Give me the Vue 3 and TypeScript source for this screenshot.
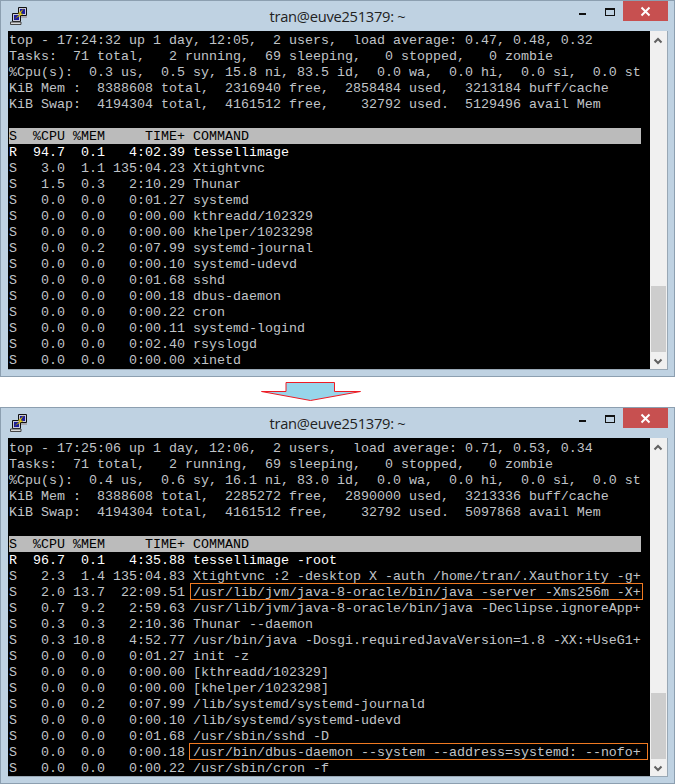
<script setup lang="ts">
interface Row { text: string; box?: string; wide?: boolean; strong?: boolean }
interface Term { summary: string[]; rows: Row[] }

const header = 'S  %CPU %MEM     TIME+ COMMAND'

const first: Term = {
  summary: [
    'top - 17:24:32 up 1 day, 12:05,  2 users,  load average: 0.47, 0.48, 0.32',
    'Tasks:  71 total,   2 running,  69 sleeping,   0 stopped,   0 zombie',
    '%Cpu(s):  0.3 us,  0.5 sy, 15.8 ni, 83.5 id,  0.0 wa,  0.0 hi,  0.0 si,  0.0 st',
    'KiB Mem :  8388608 total,  2316940 free,  2858484 used,  3213184 buff/cache',
    'KiB Swap:  4194304 total,  4161512 free,    32792 used.  5129496 avail Mem',
  ],
  rows: [
    { text: 'R  94.7  0.1   4:02.39 tessellimage', strong: true },
    { text: 'S   3.0  1.1 135:04.23 Xtightvnc' },
    { text: 'S   1.5  0.3   2:10.29 Thunar' },
    { text: 'S   0.0  0.0   0:01.27 systemd' },
    { text: 'S   0.0  0.0   0:00.00 kthreadd/102329' },
    { text: 'S   0.0  0.0   0:00.00 khelper/1023298' },
    { text: 'S   0.0  0.2   0:07.99 systemd-journal' },
    { text: 'S   0.0  0.0   0:00.10 systemd-udevd' },
    { text: 'S   0.0  0.0   0:01.68 sshd' },
    { text: 'S   0.0  0.0   0:00.18 dbus-daemon' },
    { text: 'S   0.0  0.0   0:00.22 cron' },
    { text: 'S   0.0  0.0   0:00.11 systemd-logind' },
    { text: 'S   0.0  0.0   0:02.40 rsyslogd' },
    { text: 'S   0.0  0.0   0:00.00 xinetd' },
  ],
}

const second: Term = {
  summary: [
    'top - 17:25:06 up 1 day, 12:06,  2 users,  load average: 0.71, 0.53, 0.34',
    'Tasks:  71 total,   2 running,  69 sleeping,   0 stopped,   0 zombie',
    '%Cpu(s):  0.4 us,  0.6 sy, 16.1 ni, 83.0 id,  0.0 wa,  0.0 hi,  0.0 si,  0.0 st',
    'KiB Mem :  8388608 total,  2285272 free,  2890000 used,  3213336 buff/cache',
    'KiB Swap:  4194304 total,  4161512 free,    32792 used.  5097868 avail Mem',
  ],
  rows: [
    { text: 'R  96.7  0.1   4:35.88 tessellimage -root', strong: true },
    { text: 'S   2.3  1.4 135:04.83 Xtightvnc :2 -desktop X -auth /home/tran/.Xauthority -g+' },
    { text: 'S   2.0 13.7  22:09.51 ', box: '/usr/lib/jvm/java-8-oracle/bin/java -server -Xms256m -X+' },
    { text: 'S   0.7  9.2   2:59.63 /usr/lib/jvm/java-8-oracle/bin/java -Declipse.ignoreApp+' },
    { text: 'S   0.3  0.3   2:10.36 Thunar --daemon' },
    { text: 'S   0.3 10.8   4:52.77 /usr/bin/java -Dosgi.requiredJavaVersion=1.8 -XX:+UseG1+' },
    { text: 'S   0.0  0.0   0:01.27 init -z' },
    { text: 'S   0.0  0.0   0:00.00 [kthreadd/102329]' },
    { text: 'S   0.0  0.0   0:00.00 [khelper/1023298]' },
    { text: 'S   0.0  0.2   0:07.99 /lib/systemd/systemd-journald' },
    { text: 'S   0.0  0.0   0:00.10 /lib/systemd/systemd-udevd' },
    { text: 'S   0.0  0.0   0:01.68 /usr/sbin/sshd -D' },
    { text: 'S   0.0  0.0   0:00.18 ', box: '/usr/bin/dbus-daemon --system --address=systemd: --nofo+', wide: true },
    { text: 'S   0.0  0.0   0:00.22 /usr/sbin/cron -f' },
  ],
}

const windows: Term[] = [first, second]
</script>

<template>
  <div class="page">
    <template v-for="(win, i) in windows" :key="i">
      <section class="window" :class="i === 0 ? 'window-first' : 'window-second'">
        <header class="titlebar">
          <svg class="app-icon" width="18" height="18" viewBox="0 0 18 18" aria-hidden="true">
            <path d="M8.500.5h8v8h-8z" fill="#c8c8d8" stroke="#111" />
            <path d="M10 2h5v5h-5z" fill="#1c1c9c" />
            <path d="M7 9h10v2H7z" fill="#a8a8b0" />
            <path d="M2.500 6.500h8v8h-8z" fill="#c8c8d8" stroke="#111" />
            <path d="M4 8h5v5H4z" fill="#1c1c9c" />
            <path d="M.5 15h10.500v2.500H.5z" fill="#d8d8d8" stroke="#444" />
            <path d="M13.500 2L8 6.500l2.200.5L5 11.500l8-4.500-2.300-.8z" fill="#ffe81a" stroke="#6b5a00" stroke-width=".4" />
          </svg>
          <span class="title">tran@euve251379: ~</span>
          <div class="controls">
            <span class="ctl-min"></span>
            <span class="ctl-max"></span>
            <span class="ctl-close">
              <svg width="11" height="11" viewBox="0 0 11 11" aria-hidden="true">
                <path d="M1.500 1.500l8 8M9.500 1.500l-8 8" stroke="#fff" stroke-width="2" fill="none" />
              </svg>
            </span>
          </div>
        </header>
        <div class="client">
          <div class="terminal">
            <div v-for="(line, n) in win.summary" :key="'s' + n" class="line">{{ line }}</div>
            <div class="line">&nbsp;</div>
            <div class="line header">{{ header }}</div>
            <div v-for="(row, n) in win.rows" :key="'r' + n" class="line" :class="{ strong: row.strong }">{{ row.text }}<span v-if="row.box" class="boxed" :class="{ wide: row.wide }">{{ row.box }}</span></div>
          </div>
          <div class="scrollbar">
            <svg class="arrow arrow-up" width="10" height="7" viewBox="0 0 10 7" aria-hidden="true">
              <path d="M1.500 5.500l3.500-3.500 3.500 3.500" fill="none" stroke="#606060" stroke-width="2" />
            </svg>
            <div class="thumb"></div>
            <svg class="arrow arrow-down" width="10" height="7" viewBox="0 0 10 7" aria-hidden="true">
              <path d="M1.500 1.500l3.500 3.500 3.500-3.500" fill="none" stroke="#606060" stroke-width="2" />
            </svg>
          </div>
        </div>
      </section>
      <div v-if="i === 0" class="gap">
        <svg width="100" height="20" viewBox="0 0 100 20" aria-hidden="true">
          <path d="M.5 9.500H25V.5H73.500V9.500H99.500L49.500 18.500Z" fill="#97d5ea" stroke="#ee1c25" />
        </svg>
      </div>
    </template>
  </div>
</template>

<style scoped>
.page {
  width: 675px;
  height: 784px;
  overflow: hidden;
  background: #fff;
  display: flex;
  flex-direction: column;
}
.window {
  flex: none;
  box-sizing: border-box;
  height: 377px;
  background: #bfd2e2;
  border: 1px solid #8c9fb0;
  padding: 0 7px 6px 7px;
}
.titlebar {
  height: 30px;
  position: relative;
}
.app-icon {
  position: absolute;
  left: 2px;
  top: 6px;
}
.title {
  position: absolute;
  left: 0;
  right: 0;
  top: 6px;
  text-align: center;
  font: 14.7px/18px "Open Sans", "Noto Sans", sans-serif;
  color: #222;
  letter-spacing: -0.27px;
}
.controls {
  position: absolute;
  top: 0;
  right: -2px;
  width: 90px;
  height: 20px;
}
.ctl-min {
  position: absolute;
  left: 0;
  top: 12px;
  width: 7px;
  height: 2px;
  background: #111;
}
.ctl-max {
  position: absolute;
  left: 26px;
  top: 7px;
  width: 8px;
  height: 5px;
  border: 1px solid #111;
  border-top-width: 2px;
}
.ctl-close {
  position: absolute;
  left: 44px;
  top: 0;
  width: 45px;
  height: 20px;
  background: #c75050;
  display: flex;
  align-items: center;
  justify-content: center;
}
.client {
  height: 338px;
  width: 659px;
  display: flex;
  border-right: 1px solid #99a8b5;
  border-bottom: 1px solid #99a8b5;
}
.terminal {
  width: 642px;
  background: #000;
  box-sizing: border-box;
  padding: 1px 0 0 1px;
  overflow: hidden;
  color: #c0c4c8;
}
.window-second .terminal {
  padding-top: 2px;
}
.line {
  height: 16px;
  font: 13.33px/18px "Liberation Mono", monospace;
  white-space: pre;
}
.header {
  background: #bbbbbb;
  color: #000;
  width: 632px;
}
.strong {
  color: #fff;
}
.boxed {
  display: inline-block;
  height: 16px;
  position: relative;
}
.boxed::after {
  content: "";
  position: absolute;
  left: -3px;
  right: -2px;
  top: -1px;
  bottom: 0;
  border: 1px solid #f07a22;
}
.boxed.wide::after {
  left: -4px;
  right: -7px;
}
.scrollbar {
  width: 17px;
  background: #f0f0f0;
  position: relative;
}
.arrow {
  position: absolute;
  left: 3px;
}
.arrow-up {
  top: 6px;
}
.arrow-down {
  bottom: 4px;
}
.thumb {
  position: absolute;
  left: 1px;
  top: 255px;
  width: 15px;
  height: 66px;
  background: #cdcdcd;
}
.gap {
  height: 30px;
  flex: none;
  box-sizing: border-box;
  padding: 5px 0 0 261px;
}
</style>
